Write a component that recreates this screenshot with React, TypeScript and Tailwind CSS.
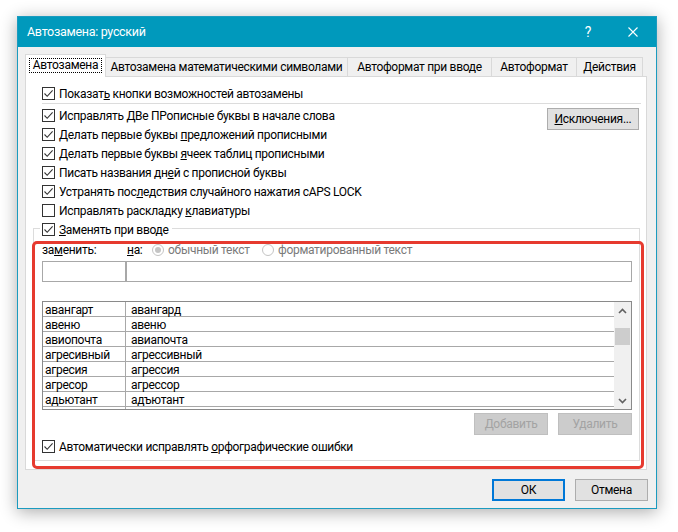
import React from "react";

function Check({ checked }: { checked: boolean }) {
  return (
    <span className="w-[13px] h-[13px] border border-[#333333] bg-white flex items-center justify-center shrink-0">
      {checked && (
        <svg width="11" height="11" viewBox="0 0 11 11">
          <path d="M1.5 5.5 L4.2 8.3 L9.6 2.4" stroke="#333333" strokeWidth="1.1" fill="none" />
        </svg>
      )}
    </span>
  );
}

function Row({ checked, children }: { checked: boolean; children: React.ReactNode }) {
  return (
    <div className="h-[19px] flex items-center">
      <Check checked={checked} />
      <span className="ml-[4px] leading-[14px] whitespace-nowrap">{children}</span>
    </div>
  );
}

const rows: [string, string][] = [
  ["авангарт", "авангард"],
  ["авеню", "авеню"],
  ["авиопочта", "авиапочта"],
  ["агресивный", "агрессивный"],
  ["агресия", "агрессия"],
  ["агресор", "агрессор"],
  ["адьютант", "адъютант"],
  ["", ""],
];

export default function App() {
  return (
    <div className="relative w-[678px] h-[532px] bg-white pl-[17px] pt-[16px] font-['Roboto',sans-serif] text-[12px] tracking-[-0.3px] text-black overflow-hidden">
      <div className="w-[640px] h-[493px] border border-[#1b9bbf] bg-[#f0f0f0] flex flex-col shadow-[0_3px_16px_rgba(0,0,0,0.33)]">
        {/* Title bar */}
        <div className="h-[30px] bg-[#0099bc] flex items-center pl-[9px] pr-[18px] text-white shrink-0">
          <span className="leading-[14px] text-[12.5px]">Автозамена: русский</span>
          <span className="ml-auto text-[14px] leading-none">?</span>
          <svg className="ml-[37px]" width="10" height="10" viewBox="0 0 10 10">
            <path d="M0.5 0.5 L9.5 9.5 M9.5 0.5 L0.5 9.5" stroke="white" strokeWidth="1.1" />
          </svg>
        </div>

        {/* Body */}
        <div className="flex-1 pl-[7px] pt-[7px] flex flex-col">
          {/* Tabs */}
          <div className="flex items-end h-[22px] whitespace-nowrap">
            <div className="relative z-10 h-[23px] -mb-px w-[81px] bg-white border border-b-0 border-[#d9d9d9] flex items-center justify-center">
              <span className="outline-1 outline-dotted outline-black px-[3px] leading-[13px] -mt-[2px]">Автозамена</span>
            </div>
            <div className="h-[19px] w-[242px] border-t border-r border-[#d9d9d9] bg-[#f0f0f0] flex items-center justify-center leading-[14px]">Автозамена математическими символами</div>
            <div className="h-[19px] w-[144px] border-t border-r border-[#d9d9d9] bg-[#f0f0f0] flex items-center justify-center leading-[14px]">Автоформат при вводе</div>
            <div className="h-[19px] w-[85px] border-t border-r border-[#d9d9d9] bg-[#f0f0f0] flex items-center justify-center leading-[14px]">Автоформат</div>
            <div className="h-[19px] w-[66px] border-t border-r border-[#d9d9d9] bg-[#f0f0f0] flex items-center justify-center leading-[14px]">Действия</div>
          </div>

          {/* Panel */}
          <div className="w-[622px] h-[394px] border border-[#d9d9d9] bg-white pl-[7px] pt-[7px] flex flex-col">
            <div className="ml-[9px]">
              <Row checked>
                Показат<u>ь</u> кнопки возможностей автозамены
              </Row>
            </div>
            <div className="ml-[9px] w-[599px] h-px bg-[#dcdcdc]" />
            <div className="ml-[9px] mt-[2px] w-[597px] flex justify-between">
              <div className="flex flex-col">
                <Row checked>Исправлять ДВе ПРописные буквы в начале слова</Row>
                <Row checked>
                  Делать первые буквы <u>п</u>редложений прописными
                </Row>
                <Row checked>
                  Делать первые буквы <u>я</u>чеек таблиц прописными
                </Row>
                <Row checked>
                  Писать названия дн<u>е</u>й с прописной буквы
                </Row>
                <Row checked>
                  Устранять пос<u>л</u>едствия случайного нажатия cAPS LOCK
                </Row>
                <Row checked={false}>
                  Исправлять раскладку <u>к</u>лавиатуры
                </Row>
              </div>
              <div className="w-[92px] h-[22px] mt-[2px] border border-[#adadad] bg-[#e1e1e1] flex items-center justify-center leading-[14px]">
                <span>
                  <u>И</u>сключения...
                </span>
              </div>
            </div>

            {/* Group box */}
            <div className="mt-[8px] w-[607px] h-[233px] border border-[#dcdcdc] pl-[8px] flex flex-col">
              <div className="-mt-[9px] -ml-[2px] pl-[2px] pr-[3px] h-[19px] w-fit bg-white flex items-center">
                <Check checked />
                <span className="ml-[4px] leading-[14px]">
                  <u>З</u>аменять при вводе
                </span>
              </div>
              <div className="mt-[3px] h-[16px] flex items-center leading-[14px] whitespace-nowrap">
                <span className="w-[85px]">
                  за<u>м</u>енить:
                </span>
                <span className="w-[25px]">
                  <u>н</u>а:
                </span>
                <span className="w-[12px] h-[12px] rounded-full border border-[#c4c4c4] bg-white flex items-center justify-center shrink-0">
                  <span className="w-[6px] h-[6px] rounded-full bg-[#c4c4c4]" />
                </span>
                <span className="ml-[4px] w-[94px] text-[#7a7a7a]">обычный текст</span>
                <span className="w-[12px] h-[12px] rounded-full border border-[#c4c4c4] bg-white shrink-0" />
                <span className="ml-[4px] text-[#7a7a7a]">форматированный текст</span>
              </div>
              <div className="mt-[3px] flex">
                <div className="w-[84px] h-[21px] border border-[#a8a8a8] bg-white" />
                <div className="w-[506px] h-[21px] border border-[#a8a8a8] bg-white" />
              </div>

              {/* List */}
              <div className="mt-[19px] w-[590px] h-[109px] border border-[#8a8a8a] bg-white flex">
                <div className="flex-1 flex flex-col overflow-hidden">
                  {rows.map(([a, b], i) => (
                    <div key={i} className="h-[15px] shrink-0 flex border-b border-[#a8a8a8] leading-[14px]">
                      <div className="w-[83px] border-r border-[#a8a8a8] pl-[2px] pt-[1px]">{a}</div>
                      <div className="pl-[5px] pt-[1px]">{b}</div>
                    </div>
                  ))}
                </div>
                <div className="w-[17px] bg-[#f0f0f0] flex flex-col shrink-0">
                  <div className="h-[17px] flex items-center justify-center">
                    <svg width="9" height="6" viewBox="0 0 9 6">
                      <path d="M1 5 L4.5 1.5 L8 5" stroke="#606060" strokeWidth="1.6" fill="none" />
                    </svg>
                  </div>
                  <div className="mt-[9px] mx-[1px] h-[17px] bg-[#cdcdcd]" />
                  <div className="flex-1" />
                  <div className="h-[17px] flex items-center justify-center">
                    <svg width="9" height="6" viewBox="0 0 9 6">
                      <path d="M1 1 L4.5 4.5 L8 1" stroke="#606060" strokeWidth="1.6" fill="none" />
                    </svg>
                  </div>
                </div>
              </div>

              <div className="mt-[3px] w-[590px] flex justify-end gap-[10px]">
                <div className="w-[74px] h-[22px] border border-[#bfbfbf] bg-[#cccccc] flex items-center justify-center leading-[14px] text-[#a3a3a3]">Добавить</div>
                <div className="w-[74px] h-[22px] border border-[#bfbfbf] bg-[#cccccc] flex items-center justify-center leading-[14px] text-[#a3a3a3]">Удалить</div>
              </div>
              <div className="mt-[2px]">
                <Row checked>
                  Автоматически исправлять <u>о</u>рфографические ошибки
                </Row>
              </div>
            </div>
          </div>

          {/* Footer */}
          <div className="w-[623px] pt-[9px] flex justify-end gap-[10px]">
            <div className="w-[73px] h-[22px] border-2 border-[#0078d7] bg-[#e1e1e1] flex items-center justify-center leading-[14px]">ОК</div>
            <div className="w-[73px] h-[22px] border border-[#adadad] bg-[#e1e1e1] flex items-center justify-center leading-[14px]">Отмена</div>
          </div>
        </div>
      </div>

      {/* Red annotation overlay */}
      <div className="absolute left-[32px] top-[241px] w-[612px] h-[228px] border-[3px] border-[#e63a2f] rounded-[5px] pointer-events-none" />
    </div>
  );
}
